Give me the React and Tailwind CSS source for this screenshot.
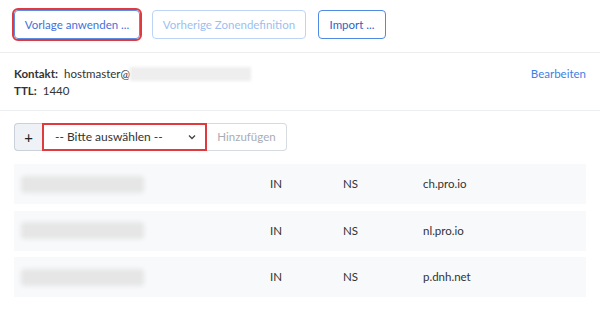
const records = [
    { type: 'IN', kind: 'NS', value: 'ch.pro.io' },
    { type: 'IN', kind: 'NS', value: 'nl.pro.io' },
    { type: 'IN', kind: 'NS', value: 'p.dnh.net' }
];

function Chevron() {
    return (
        <svg width="10" height="10" viewBox="0 0 10 10" fill="none" stroke="#444" strokeWidth="1.3">
            <path d="M2 3.5 L5 6.5 L8 3.5" />
        </svg>
    );
}

function App() {
    return (
        <div className="w-[600px] h-[325px] bg-white text-[11.5px] text-[#333] font-['Lato',sans-serif] overflow-hidden">
            {/* Aktionen */}
            <div className="flex items-start gap-3 px-[14px] pt-[10px] h-[53px] border-b border-[#eceef1]">
                <button className="h-[29px] w-[126px] rounded border border-[#5b8fe6] text-[#3f72d9] outline-2 outline-[#e0393e]">
                    Vorlage anwenden ...
                </button>
                <button className="h-[29px] w-[154px] rounded border border-[#bcd5f7] text-[#9cbff0]">
                    Vorherige Zonendefinition
                </button>
                <button className="h-[29px] w-[68px] rounded border border-[#4f8ae3] text-[#2f62c9]">
                    Import ...
                </button>
            </div>

            {/* SOA Info */}
            <div className="flex justify-between px-[14px] pt-3 h-[58px] border-b border-[#eceef1] leading-[17px]">
                <div>
                    <div className="flex items-center">
                        <span className="font-bold">Kontakt:</span>
                        <span className="ml-1.5">hostmaster@</span>
                        <span className="inline-block w-[121px] h-[14px] bg-[#eeeeee] blur-[1.5px]" />
                    </div>
                    <div>
                        <span className="font-bold">TTL:</span>
                        <span className="ml-1.5">1440</span>
                    </div>
                </div>
                <a className="text-[#3b82e6]">Bearbeiten</a>
            </div>

            {/* Neuer Eintrag */}
            <div className="flex px-[14px] pt-3 h-[53px]">
                <button className="w-[28px] h-[28px] rounded-l border border-r-0 border-[#c9d1db] bg-[#eef1f5] text-[15px] text-[#222]">
                    +
                </button>
                <div className="flex items-center justify-between w-[165px] h-[28px] pl-[11px] pr-[8px] border-2 border-[#e0393e] bg-white">
                    <span className="text-[12px]">-- Bitte auswählen --</span>
                    <Chevron />
                </div>
                <button className="w-[80px] h-[28px] rounded-r border border-l-0 border-[#d6dbe2] text-[#a8adb4]">
                    Hinzufügen
                </button>
            </div>

            {/* Einträge */}
            <div className="flex flex-col gap-[6.5px] px-[14px]">
                {records.map((rec) => (
                    <div key={rec.value} className="grid grid-cols-[249px_73px_80px_1fr] items-center h-10 pl-[7px] bg-[#f8f9fb]">
                        <span className="w-[123px] h-[17px] rounded-sm bg-[#e6e6e6] blur-[2px]" />
                        <span>{rec.type}</span>
                        <span>{rec.kind}</span>
                        <span>{rec.value}</span>
                    </div>
                ))}
            </div>
        </div>
    );
}

export default App;
